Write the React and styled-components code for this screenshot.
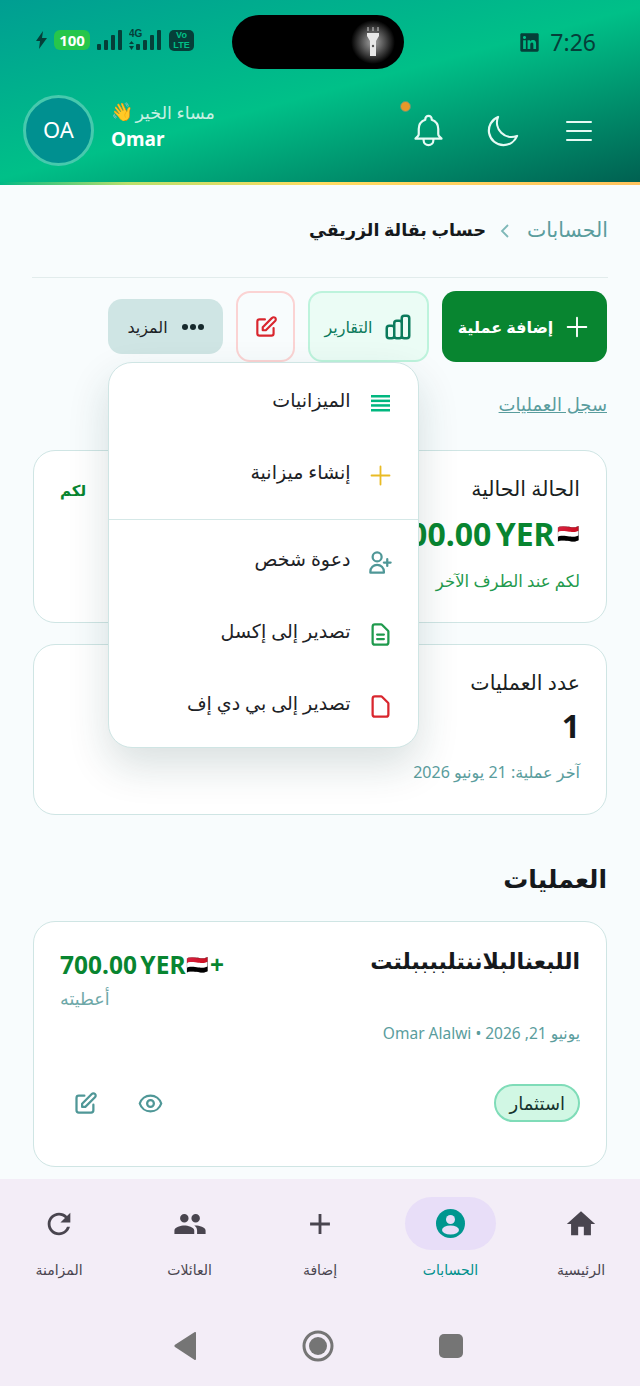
import React from 'react'
import styled, { createGlobalStyle } from 'styled-components'
import { FaLinkedin } from 'react-icons/fa'
import { MdHome, MdAdd, MdPeople, MdRefresh } from 'react-icons/md'
import {
  HiOutlineBell,
  HiOutlineMoon,
  HiOutlineMenu,
  HiOutlinePlus,
  HiOutlineChartBar,
  HiOutlinePencilAlt,
  HiOutlineUserAdd,
  HiOutlineDocumentText,
  HiOutlineDocument,
  HiOutlineEye,
} from 'react-icons/hi'

const FONT = `"Noto Sans", "DejaVu Sans", sans-serif`

const Global = createGlobalStyle`
* { box-sizing: border-box; }
html, body { margin: 0; padding: 0; background: #f8fcfd; }
body { font-family: ${FONT}; }
`

const Screen = styled.div`
width: 640px;
height: 1386px;
display: flex;
flex-direction: column;
overflow: hidden;
direction: rtl;
background: #f8fcfd;
`

const Header = styled.header`
direction: ltr;
height: 185px;
flex: none;
display: flex;
flex-direction: column;
position: relative;
background: linear-gradient(165deg, #009e92 0%, #00c088 50%, #005f50 100%);
&::after {
  content: '';
  position: absolute;
  left: 0;
  right: 0;
  bottom: 0;
  height: 3px;
  background: linear-gradient(90deg, #00b985 0%, #b9e06c 20%, #ffdc63 50%, #ffc35e 100%);
}
`

const StatusBar = styled.div`
display: grid;
grid-template-columns: 196px 172px 1fr;
align-items: center;
padding: 15px 44px 0 36px;
color: #053f39;
`

const StatusLeft = styled.div`
display: flex;
align-items: center;
gap: 7px;
margin-bottom: 4px;
`

const Battery = styled.span`
width: 36px;
height: 20px;
border-radius: 6px;
background: #26c64b;
color: #fff;
font-size: 15px;
font-weight: 700;
display: flex;
align-items: center;
justify-content: center;
`

const Signal4GIcon = styled.svg`
margin-top: -3px;
`

const Volte = styled.span`
width: 25px;
height: 21px;
border-radius: 5px;
background: #053f39;
color: #00c088;
font-family: "Liberation Sans", sans-serif;
font-size: 9px;
font-weight: 700;
line-height: 10px;
text-align: center;
padding-top: 0.5px;
`

const Island = styled.div`
height: 54px;
border-radius: 27px;
background: #000;
display: flex;
justify-content: flex-end;
align-items: center;
padding-right: 9px;
`

const StatusRight = styled.div`
display: flex;
justify-content: flex-end;
align-items: center;
gap: 10px;
font-size: 23px;
`

const TopRow = styled.div`
display: flex;
align-items: center;
padding: 26px 42px 0 23px;
`

const Avatar = styled.div`
width: 71px;
height: 71px;
border-radius: 50%;
border: 3px solid #46c9ad;
background: #009090;
color: #fff;
font-size: 22px;
display: flex;
align-items: center;
justify-content: center;
padding-bottom: 4px;
`

const Greeting = styled.div`
margin: 0 0 10px 17px;
display: flex;
flex-direction: column;
gap: 2px;
flex: 1;
`

const Hello = styled.div`
display: flex;
align-items: center;
gap: 2px;
color: #c6f0e2;
font-size: 17.500px;
height: 24px;
`

const Name = styled.div`
color: #fff;
font-size: 19px;
font-weight: 700;
line-height: 26px;
`

const HeaderIcons = styled.div`
display: flex;
align-items: center;
gap: 36px;
color: #e6faf4;
font-size: 39px;
svg { stroke-width: 1.35; }
`

const IconSlot = styled.span`
position: relative;
width: 39px;
display: flex;
justify-content: center;
align-items: center;
`

const Dot = styled.span`
position: absolute;
left: -9px;
top: -10px;
width: 11px;
height: 11px;
border-radius: 50%;
background: #e8982a;
border: 1px solid #5a9a7c;
`

const Main = styled.main`
flex: 1;
min-height: 0;
padding: 0 33px;
`

const Crumbs = styled.div`
height: 93px;
margin: 0 -1px;
display: flex;
align-items: center;
padding-bottom: 4px;
border-bottom: 1px solid #e2ecec;
`

const CrumbLink = styled.span`
font-size: 20.500px;
color: #5a9d9d;
`

const CrumbSep = styled.svg`
width: 18px;
height: 18px;
margin: 4px 13px 0 10px;
color: #7fb8b8;
`

const CrumbCurrent = styled.span`
font-size: 17.500px;
font-weight: 700;
color: #16191c;
`

const Toolbar = styled.div`
display: flex;
align-items: center;
gap: 13px;
margin-top: 13px;
`

const ToolButton = styled.button`
font-family: ${FONT};
display: flex;
align-items: center;
justify-content: center;
gap: ${p => p.$gap || 10}px;
height: ${p => p.$h || 71}px;
width: ${p => p.$w}px;
border-radius: 14px;
border: ${p => (p.$border ? `2px solid ${p.$border}` : 'none')};
background: ${p => p.$bg};
color: ${p => p.$color};
font-size: 16px;
font-weight: ${p => p.$weight || 400};
padding: 0;
`

const MoreWrap = styled.div`
position: relative;
align-self: stretch;
display: flex;
align-items: center;
`

const Dots = styled.span`
display: flex;
gap: 2px;
`

const DotMark = styled.i`
width: 6px;
height: 6px;
border-radius: 50%;
background: #16292c;
`

const Menu = styled.div`
position: absolute;
top: 100%;
left: 0;
width: 311px;
height: 386px;
z-index: 5;
background: #fff;
border: 1.5px solid #cfe5e4;
border-radius: 24px;
padding: 2px 0 0;
box-shadow: 0 18px 40px rgba(20, 60, 60, 0.16);
`

const MenuRow = styled.div`
height: 72px;
display: flex;
align-items: center;
gap: 14.500px;
padding-right: 23px;
font-size: 19px;
color: #1d2226;
`

const MenuIcon = styled.span`
width: 30px;
display: flex;
justify-content: center;
font-size: 27px;
margin-top: 5px;
color: ${p => p.$color};
`

const MenuText = styled.span`
margin-bottom: 2px;
`

const MenuLine = styled.div`
height: 1px;
background: #d5e8e7;
margin: 10px 0 4px;
`

const LogLink = styled.a`
display: block;
margin-top: 31px;
font-size: 18px;
line-height: 22px;
color: #5a9d9d;
text-decoration: underline;
`

const Card = styled.section`
height: ${p => p.$h}px;
margin-top: ${p => p.$mt}px;
padding: 24px 26px 0;
background: #fff;
border: 1.5px solid #cfe5e4;
border-radius: 22px;
`

const CardTop = styled.div`
display: flex;
justify-content: space-between;
`

const StatCol = styled.div`
display: flex;
flex-direction: column;
`

const StatTitle = styled.div`
font-size: 20.500px;
line-height: 26px;
color: #1a1f22;
`

const StatAmount = styled.div`
display: flex;
align-items: center;
gap: 3px;
margin-top: 12px;
height: 40px;
font-size: 32px;
font-weight: 700;
color: #088530;
white-space: nowrap;
word-spacing: -4px;
`

const Amount = styled.span`
direction: ltr;
`

const Emoji = styled.span`
font-size: ${p => p.$size}px;
font-weight: 400;
font-family: "Noto Color Emoji", ${FONT};
`

const StatSub = styled.div`
margin-top: 17px;
font-size: ${p => p.$size || 16}px;
line-height: 22px;
color: ${p => p.$color};
`

const OweBadge = styled.div`
font-size: 15px;
font-weight: 700;
color: #088530;
margin-top: 5px;
`

const Count = styled.div`
margin-top: 9px;
height: 40px;
font-size: 32px;
font-weight: 700;
color: #16191c;
`

const SectionTitle = styled.h2`
margin: 47px 0 0;
font-size: 25px;
line-height: 32px;
font-weight: 700;
color: #16191c;
`

const TxCard = styled(Card)`
padding-top: 21px;
`

const TxTitle = styled.div`
font-size: 22px;
line-height: 34px;
font-weight: 700;
color: #16191c;
`

const TxAmountCol = styled.div`
display: flex;
flex-direction: column;
align-items: flex-end;
margin-top: 1px;
`

const TxAmount = styled.div`
display: flex;
align-items: center;
gap: 1px;
height: 40px;
font-size: 24.500px;
font-weight: 700;
color: #088530;
word-spacing: -3px;
`

const TxNote = styled.div`
font-size: 17.500px;
line-height: 24px;
color: #6ea8a8;
margin-top: 2px;
`

const TxMeta = styled.div`
margin-top: 12px;
font-size: 15.500px;
line-height: 22px;
color: #5a9d9d;
`

const TxFoot = styled.div`
display: flex;
justify-content: space-between;
align-items: center;
margin-top: 40px;
`

const Tag = styled.span`
height: 38px;
padding: 0 13px;
display: flex;
align-items: center;
border-radius: 19px;
background: #d1f7e4;
border: 2px solid #7fdcb8;
font-size: 18px;
color: #16332e;
`

const TxActions = styled.div`
display: flex;
align-items: center;
gap: 38px;
padding-left: 12px;
color: #4f9797;
font-size: 27px;
`

const BottomNav = styled.nav`
flex: none;
height: 207px;
background: #f3edf7;
display: flex;
flex-direction: column;
`

const Tabs = styled.div`
display: grid;
grid-template-columns: repeat(5, 130.5px);
justify-content: center;
padding-top: 18px;
`

const Tab = styled.div`
display: flex;
flex-direction: column;
align-items: center;
font-size: 14px;
color: ${p => (p.$active ? '#00908c' : '#49454f')};
`

const TabIcon = styled.span`
width: 91px;
height: 53px;
border-radius: 27px;
display: flex;
align-items: center;
justify-content: center;
font-size: 34px;
color: ${p => (p.$active ? '#00968f' : '#49454f')};
background: ${p => (p.$active ? '#e8def8' : 'transparent')};
`

const TabLabel = styled.span`
margin-top: 8px;
line-height: 24px;
`

const SystemBar = styled.div`
direction: ltr;
display: flex;
align-items: center;
justify-content: center;
gap: 105px;
margin-top: 48px;
padding-right: 3px;
color: #757575;
`

const Bolt = () => (
  <svg width="11" height="18" viewBox="0 0 11 18"><path d="M7 0 0 10h4l-1 8 8-11H6z" fill="currentColor" /></svg>
)

const Signal = () => (
  <svg width="25" height="20" viewBox="0 0 25 20" fill="currentColor">
    <rect x="0" y="14" width="4" height="6" rx="1" />
    <rect x="7" y="10" width="4" height="10" rx="1" />
    <rect x="14" y="5" width="4" height="15" rx="1" />
    <rect x="21" y="0" width="4" height="20" rx="1" />
  </svg>
)

const Signal4G = () => (
  <Signal4GIcon width="33" height="23" viewBox="0 -3 33 23" fill="currentColor">
    <path d="M2.500 11 5 14H0zM2.500 20 0 16h5z" />
    <rect x="7" y="14" width="4" height="6" rx="1" />
    <rect x="14" y="10" width="4" height="10" rx="1" />
    <rect x="21" y="5" width="4" height="15" rx="1" />
    <rect x="28" y="0" width="4" height="20" rx="1" />
    <text x="0" y="7" fontSize="10" fontWeight="700" fontFamily="Liberation Sans">4G</text>
  </Signal4GIcon>
)

const Torch = () => (
  <svg width="44" height="44" viewBox="0 0 44 44">
    <defs>
      <radialGradient id="glow">
        <stop offset="0" stopColor="#a8a8a8" />
        <stop offset="0.5" stopColor="#555" />
        <stop offset="1" stopColor="#000" />
      </radialGradient>
    </defs>
    <circle cx="22" cy="22" r="22" fill="url(#glow)" />
    <path d="M16 13h12v3l-3 5v15h-6V21l-3-5z" fill="#e8e8e8" />
    <path d="M17 7v4M22 7v4M27 7v4" stroke="#cfcfcf" strokeWidth="1" />
    <circle cx="22" cy="26" r="1.200" fill="#555" />
  </svg>
)

const AccountIcon = () => (
  <svg width="29" height="29" viewBox="0 0 29 29">
    <circle cx="14.500" cy="14.500" r="14.500" fill="#00968f" />
    <circle cx="14.500" cy="10.500" r="4.500" fill="#e8def8" />
    <ellipse cx="14.500" cy="21" rx="8.500" ry="4.500" fill="#e8def8" />
  </svg>
)

const ListIcon = () => (
  <svg width="19" height="17" viewBox="0 0 19 17" fill="currentColor">
    <rect y="0" width="19" height="2.500" />
    <rect y="4.600" width="19" height="2.500" />
    <rect y="9.200" width="19" height="2.500" />
    <rect y="14" width="19" height="2.500" />
  </svg>
)

const tabs = [
  { label: 'الرئيسية', icon: <MdHome /> },
  { label: 'الحسابات', icon: <AccountIcon />, active: true },
  { label: 'إضافة', icon: <MdAdd /> },
  { label: 'العائلات', icon: <MdPeople /> },
  { label: 'المزامنة', icon: <MdRefresh /> },
]

const menuTop = [
  { label: 'الميزانيات', icon: <ListIcon />, color: '#00b77f' },
  { label: 'إنشاء ميزانية', icon: <HiOutlinePlus strokeWidth={1.6} />, color: '#e9bb24' },
]

const menuBottom = [
  { label: 'دعوة شخص', icon: <HiOutlineUserAdd />, color: '#4f9797' },
  { label: 'تصدير إلى إكسل', icon: <HiOutlineDocumentText />, color: '#1f9a4d' },
  { label: 'تصدير إلى بي دي إف', icon: <HiOutlineDocument />, color: '#d9262e' },
]

const App = () => {
  return (
    <Screen>
      <Global />
      <Header>
        <StatusBar>
          <StatusLeft>
            <Bolt />
            <Battery>100</Battery>
            <Signal />
            <Signal4G />
            <Volte>Vo<br />LTE</Volte>
          </StatusLeft>
          <Island><Torch /></Island>
          <StatusRight><FaLinkedin size={21} />7:26</StatusRight>
        </StatusBar>
        <TopRow>
          <Avatar>OA</Avatar>
          <Greeting>
            <Hello><Emoji $size={18}>👋</Emoji>مساء الخير</Hello>
            <Name>Omar</Name>
          </Greeting>
          <HeaderIcons>
            <IconSlot><Dot /><HiOutlineBell /></IconSlot>
            <IconSlot><HiOutlineMoon /></IconSlot>
            <IconSlot><HiOutlineMenu size={36} /></IconSlot>
          </HeaderIcons>
        </TopRow>
      </Header>

      <Main>
        <Crumbs>
          <CrumbLink>الحسابات</CrumbLink>
          <CrumbSep viewBox="0 0 18 18" fill="none" stroke="currentColor" strokeWidth="1.800"><path d="M12 3 6 9l6 6" /></CrumbSep>
          <CrumbCurrent>حساب بقالة الزريقي</CrumbCurrent>
        </Crumbs>

        <Toolbar>
          <ToolButton $w={165} $bg="#088530" $color="#fff" $weight={700}>
            <HiOutlinePlus size={28} strokeWidth={1.6} />إضافة عملية
          </ToolButton>
          <ToolButton $w={121} $bg="#ebfcf5" $border="#bdf3dc" $color="#0b7a5c">
            <HiOutlineChartBar size={30} />التقارير
          </ToolButton>
          <ToolButton $w={59} $bg="#f8fcfd" $border="#fbd3d3" $color="#d9262e">
            <HiOutlinePencilAlt size={26} />
          </ToolButton>
          <MoreWrap>
            <ToolButton $w={115} $h={55} $gap={14} $bg="#cfe5e4" $color="#1d2226">
              <Dots><DotMark /><DotMark /><DotMark /></Dots>المزيد
            </ToolButton>
            <Menu>
              {menuTop.map(item => (
                <MenuRow key={item.label}>
                  <MenuIcon $color={item.color}>{item.icon}</MenuIcon>
                  <MenuText>{item.label}</MenuText>
                </MenuRow>
              ))}
              <MenuLine />
              {menuBottom.map(item => (
                <MenuRow key={item.label}>
                  <MenuIcon $color={item.color}>{item.icon}</MenuIcon>
                  <MenuText>{item.label}</MenuText>
                </MenuRow>
              ))}
            </Menu>
          </MoreWrap>
        </Toolbar>

        <LogLink>سجل العمليات</LogLink>

        <Card $h={173} $mt={35}>
          <CardTop>
            <StatCol>
              <StatTitle>الحالة الحالية</StatTitle>
              <StatAmount><Emoji $size={18}>🇾🇪</Emoji><Amount>700.00 YER</Amount></StatAmount>
              <StatSub $size={16.5} $color="#1f9a4d">لكم عند الطرف الآخر</StatSub>
            </StatCol>
            <OweBadge>لكم</OweBadge>
          </CardTop>
        </Card>

        <Card $h={171} $mt={21}>
          <StatTitle>عدد العمليات</StatTitle>
          <Count>1</Count>
          <StatSub $color="#5a9d9d">آخر عملية: 21 يونيو 2026</StatSub>
        </Card>

        <SectionTitle>العمليات</SectionTitle>

        <TxCard $h={246} $mt={27}>
          <CardTop>
            <TxTitle>اللبعنالبلاننتلببببلتت</TxTitle>
            <TxAmountCol>
              <TxAmount>+<Emoji $size={18}>🇾🇪</Emoji><Amount>700.00 YER</Amount></TxAmount>
              <TxNote>أعطيته</TxNote>
            </TxAmountCol>
          </CardTop>
          <TxMeta>يونيو 21, 2026 • Omar Alalwi</TxMeta>
          <TxFoot>
            <Tag>استثمار</Tag>
            <TxActions>
              <HiOutlineEye />
              <HiOutlinePencilAlt />
            </TxActions>
          </TxFoot>
        </TxCard>
      </Main>

      <BottomNav>
        <Tabs>
          {tabs.map(t => (
            <Tab key={t.label} $active={t.active}>
              <TabIcon $active={t.active}>{t.icon}</TabIcon>
              <TabLabel>{t.label}</TabLabel>
            </Tab>
          ))}
        </Tabs>
        <SystemBar>
          <svg width="23" height="28" viewBox="0 0 23 28"><path d="M22 1v26a1 1 0 0 1-1.600.8L1 15a1.500 1.500 0 0 1 0-2.200L20.400.2A1 1 0 0 1 22 1z" fill="currentColor" /></svg>
          <svg width="32" height="32" viewBox="0 0 32 32"><circle cx="16" cy="16" r="14" fill="none" stroke="currentColor" strokeWidth="3" /><circle cx="16" cy="16" r="9" fill="currentColor" /></svg>
          <svg width="24" height="24" viewBox="0 0 24 24"><rect width="24" height="24" rx="5" fill="currentColor" /></svg>
        </SystemBar>
      </BottomNav>
    </Screen>
  )
}

export default App
